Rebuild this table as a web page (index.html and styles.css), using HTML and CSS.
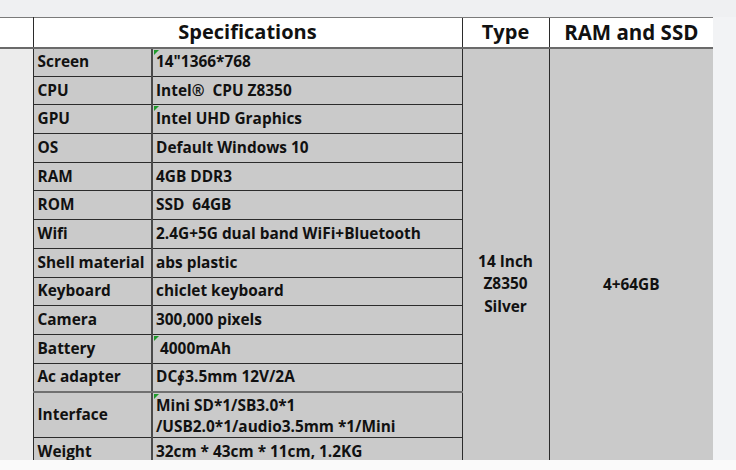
FILE: index.html
```html
<!DOCTYPE html>
<html>
<head>
<meta charset="utf-8">
<link rel="stylesheet" href="styles.css">
</head>
<body>
<div class="page">
  <div class="topbar"></div>
  <div class="viewport">
    <table class="spec">
      <colgroup>
        <col class="c0"><col class="c1"><col class="c2"><col class="c3"><col class="c4">
      </colgroup>
      <thead>
        <tr class="head">
          <th class="edge"></th>
          <th colspan="2" class="h">Specifications</th>
          <th class="h">Type</th>
          <th class="h last">RAM and SSD</th>
        </tr>
      </thead>
      <tbody>
        <tr><td class="edge" rowspan="14"></td><td class="lab">Screen</td><td class="val"><span class="mark"></span>14"1366*768</td>
          <td class="type" rowspan="14">14 Inch<br>Z8350<br>Silver</td>
          <td class="ram" rowspan="14">4+64GB</td></tr>
        <tr><td class="lab">CPU</td><td class="val">Intel®&nbsp; CPU Z8350</td></tr>
        <tr><td class="lab">GPU</td><td class="val"><span class="mark"></span>Intel UHD Graphics</td></tr>
        <tr><td class="lab">OS</td><td class="val">Default Windows 10</td></tr>
        <tr><td class="lab">RAM</td><td class="val">4GB DDR3</td></tr>
        <tr><td class="lab">ROM</td><td class="val">SSD&nbsp; 64GB</td></tr>
        <tr><td class="lab">Wifi</td><td class="val">2.4G+5G dual band WiFi+Bluetooth</td></tr>
        <tr><td class="lab">Shell material</td><td class="val">abs plastic</td></tr>
        <tr><td class="lab">Keyboard</td><td class="val">chiclet keyboard</td></tr>
        <tr><td class="lab">Camera</td><td class="val">300,000 pixels</td></tr>
        <tr><td class="lab">Battery</td><td class="val"><span class="mark"></span>&nbsp;4000mAh</td></tr>
        <tr><td class="lab soft">Ac adapter</td><td class="val soft">DC∮3.5mm 12V/2A</td></tr>
        <tr class="tall"><td class="lab">Interface</td><td class="val two"><span class="mark"></span>Mini SD*1/SB3.0*1<br>/USB2.0*1/audio3.5mm *1/Mini</td></tr>
        <tr><td class="lab">Weight</td><td class="val">32cm * 43cm * 11cm, 1.2KG</td></tr>
      </tbody>
    </table>
  </div>
  <div class="bottombar"></div>
</div>
</body>
</html>
```

FILE: styles.css
```css
* { box-sizing: border-box; }
html, body { margin: 0; padding: 0; }
body {
  background: #fafafa;
  font-family: "Open Sans", "Noto Sans", "Liberation Sans", sans-serif;
  color: #111;
}
.page { width: 736px; height: 470px; display: flex; flex-direction: column; }
.topbar { height: 17px; background: #eff0f2; flex: none; }
.viewport {
  height: 443px;
  overflow: hidden;
  background: #f2f3f5;
  flex: none;
}
.bottombar { flex: 1; background: #fafafa; }

.spec {
  border-collapse: collapse;
  table-layout: fixed;
  width: 713px;
  font-weight: 700;
}
.c0 { width: 33px; }
.c1 { width: 119px; }
.c2 { width: 310px; }
.c3 { width: 87px; }
.c4 { width: 164px; }

.head th {
  height: 30px;
  background: #fff;
  border-top: 1px solid #7a7a7a;
  border-bottom: 2px solid #6a6a6a;
  padding: 0;
  font-size: 20px;
  font-weight: 700;
  text-align: center;
  line-height: 26px;
}
.head th.h { border-left: 1px solid #2b2b2b; }
.head th.edge { border-right: 1px solid #2b2b2b; }
.head th.last { font-size: 20.5px; }

td {
  padding: 0 3px;
  font-size: 15.4px;
  line-height: 20px;
  height: 28.7px;
  white-space: nowrap;
  overflow: visible;
}
td.edge { background: #ececec; border-right: 1px solid #2b2b2b; padding: 0; }
td.lab {
  background: #cacaca;
  border-bottom: 1px solid #2b2b2b;
  border-right: 2px solid #4a4a4a;
  padding-left: 4px;
  padding-right: 0;
}
td.val {
  background: #cacaca;
  border-bottom: 1px solid #2b2b2b;
  border-right: 1px solid #2b2b2b;
  position: relative;
}
td.soft { border-bottom: 2px solid #707070; }
tr.tall td { height: 45px; }
td.two { line-height: 21px; padding-top: 2px; }
.mark {
  position: absolute;
  left: 1px;
  top: 1px;
  width: 0;
  height: 0;
  border-top: 5px solid #1f9a2a;
  border-right: 5px solid transparent;
}
td.type, td.ram {
  background: #cacaca;
  vertical-align: top;
  text-align: center;
  line-height: 22.5px;
  border-right: 1px solid #2b2b2b;
}
td.type { padding-top: 202px; }
td.ram { padding-top: 225px; border-right: none; }
```
